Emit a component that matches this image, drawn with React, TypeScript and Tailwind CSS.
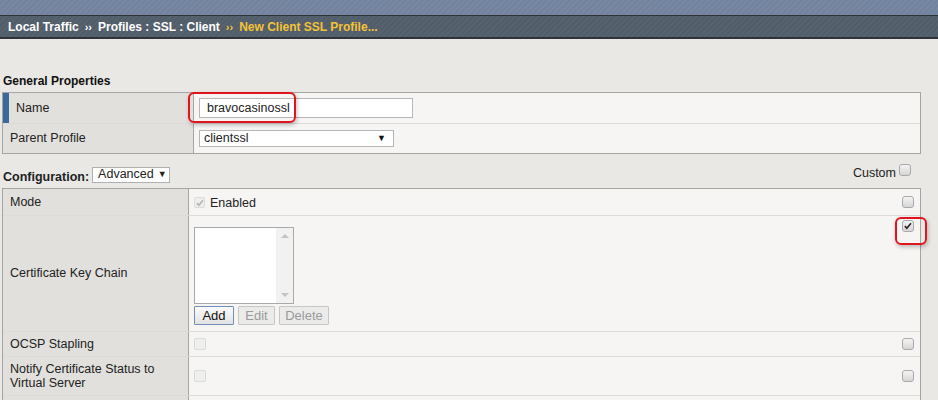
import React from "react";

const font = { fontFamily: '"Liberation Sans", Arial, sans-serif' };

function Box({ checked = false }: { checked?: boolean }) {
  return (
    <span className="relative inline-block w-[12px] h-[12px] rounded-[3px] border border-[#a9a9a9] bg-[linear-gradient(#f4f4f4,#d6d6d6)]">
      {checked && (
        <svg viewBox="0 0 12 12" className="absolute left-0 top-0 w-[10px] h-[10px]">
          <path d="M2.2 6.2 L4.6 8.6 L9.6 2.6" fill="none" stroke="#2a2a2a" strokeWidth="2" />
        </svg>
      )}
    </span>
  );
}

function FaintBox() {
  return <span className="inline-block w-[12px] h-[12px] rounded-[2px] border border-[#dadada] bg-[#efefed]" />;
}

export default function App() {
  return (
    <div className="w-[938px] h-[400px] overflow-hidden bg-[#e9e8e4] text-[12px] text-[#222]" style={font}>
      {/* top band */}
      <div className="h-[16px] border-b border-[#2f3236] bg-[#7686a0] bg-[repeating-linear-gradient(135deg,#7888a2_0px,#7888a2_2px,#7283a0_2px,#7283a0_4px)]" />
      {/* breadcrumb */}
      <div className="h-[23px] border-b-2 border-[#2f3236] bg-[#55606d] bg-[repeating-linear-gradient(135deg,#57626f_0px,#57626f_2px,#525d6a_2px,#525d6a_4px)] flex items-center pl-[8px] pt-[1px] font-bold text-[12px]">
        <span className="text-white">Local Traffic</span>
        <span className="text-white mx-[6px] text-[11px]">››</span>
        <span className="text-white">Profiles : SSL : Client</span>
        <span className="text-[#f4c335] mx-[6px] text-[11px]">››</span>
        <span className="text-[#f4c335]">New Client SSL Profile...</span>
      </div>

      <div className="pl-[2px] relative">
        <div className="pt-[35px] pl-[1px] h-[53px] font-bold text-[12px] leading-[14px] text-[#111]">General Properties</div>

        {/* General properties table */}
        <div className="w-[919px] border border-[#a5a5a3] bg-[#f6f5f3]">
          <div className="flex h-[31px] border-b border-[#dcdbd8]">
            <div className="w-[191px] bg-[#e1e0dd] border-r border-[#a5a5a3] border-l-[6px] border-l-[#3b6a9a] flex items-center pl-[7px] text-[12.5px]">Name</div>
            <div className="flex items-center pl-[5px]">
              <div className="w-[214px] h-[20px] border border-[#b6b6b6] bg-white flex items-center pl-[7px] text-[12.5px] text-[#222]">bravocasinossl</div>
            </div>
          </div>
          <div className="flex h-[29px]">
            <div className="w-[191px] bg-[#e1e0dd] border-r border-[#a5a5a3] flex items-center pl-[7px] text-[12.5px]">Parent Profile</div>
            <div className="flex items-center pl-[5px]">
              <div className="w-[195px] h-[17px] border border-[#b6b6b6] bg-white flex items-center justify-between pl-[4px] pr-[7px] text-[12.5px]">
                <span>clientssl</span>
                <span className="text-[9px] text-[#111]">▼</span>
              </div>
            </div>
          </div>
        </div>

        {/* Configuration row */}
        <div className="h-[34px] w-[919px] flex items-end pb-[1px] justify-between">
          <div className="flex items-center">
            <span className="font-bold text-[12.5px] pl-[1px] mt-[6px]">Configuration:</span>
            <div className="ml-[3px] w-[78px] h-[16px] border border-[#b0b0b0] bg-white flex items-center pl-[5px] text-[12.5px]">
              Advanced <span className="ml-[4px] text-[9px]">▼</span>
            </div>
          </div>
          <div className="flex items-center pr-[10px] mb-[4px]">
            <span className="text-[12.5px]">Custom</span>
            <span className="ml-[3px] -mt-[4px]"><Box /></span>
          </div>
        </div>

        {/* Configuration table */}
        <div className="w-[919px] border border-[#a5a5a3] border-b-0 bg-[#f6f5f3] text-[12.5px]">
          <div className="flex h-[27px] border-b border-[#dcdbd8]">
            <div className="w-[186px] shrink-0 bg-[#e1e0dd] border-r border-[#a5a5a3] flex items-center pl-[7px]">Mode</div>
            <div className="flex-1 flex items-center pl-[5px] justify-between pr-[6px]">
              <span className="flex items-center">
                <span className="relative inline-block w-[11px] h-[11px] rounded-[2px] border border-[#dcdcdc] bg-[#eeeeec]">
                  <svg viewBox="0 0 12 12" className="absolute left-0 top-0 w-[10px] h-[10px]">
                    <path d="M2.2 6.2 L4.6 8.6 L9.6 2.6" fill="none" stroke="#b5b5b5" strokeWidth="2" />
                  </svg>
                </span>
                <span className="ml-[5px] mt-[2px]">Enabled</span>
              </span>
              <Box />
            </div>
          </div>

          <div className="flex h-[116px] border-b border-[#dcdbd8]">
            <div className="w-[186px] shrink-0 bg-[#e1e0dd] border-r border-[#a5a5a3] flex items-center pl-[7px]">Certificate Key Chain</div>
            <div className="flex-1 flex justify-between pl-[5px] pr-[6px]">
              <div className="pt-[11px]">
                <div className="w-[100px] h-[77px] border border-[#a9a9a9] bg-white flex justify-end">
                  <div className="w-[17px] bg-[#f1f1f1] flex flex-col items-center justify-between py-[6px]">
                    <span className="w-0 h-0 border-l-[4px] border-r-[4px] border-b-[4px] border-l-transparent border-r-transparent border-b-[#c4c4c4]" />
                    <span className="w-0 h-0 border-l-[4px] border-r-[4px] border-t-[4px] border-l-transparent border-r-transparent border-t-[#c4c4c4]" />
                  </div>
                </div>
                <div className="flex gap-[4px] mt-[2px]">
                  <span className="w-[40px] h-[19px] border border-[#6f8fb8] rounded-[1px] bg-[linear-gradient(#fbfbfb,#e2e2e2)] flex items-center justify-center text-[13px] text-[#111]">Add</span>
                  <span className="w-[37px] h-[19px] border border-[#c6c6c6] rounded-[1px] bg-[#ebebea] flex items-center justify-center text-[13px] text-[#9a9a9a]">Edit</span>
                  <span className="w-[50px] h-[19px] border border-[#c6c6c6] rounded-[1px] bg-[#ebebea] flex items-center justify-center text-[13px] text-[#9a9a9a]">Delete</span>
                </div>
              </div>
              <div className="pt-[3px]">
                <Box checked />
              </div>
            </div>
          </div>

          <div className="flex h-[25px] border-b border-[#dcdbd8]">
            <div className="w-[186px] shrink-0 bg-[#e1e0dd] border-r border-[#a5a5a3] flex items-center pl-[7px]">OCSP Stapling</div>
            <div className="flex-1 flex items-center justify-between pl-[5px] pr-[6px]">
              <FaintBox />
              <Box />
            </div>
          </div>

          <div className="flex h-[39px] border-b border-[#dcdbd8]">
            <div className="w-[186px] shrink-0 bg-[#e1e0dd] border-r border-[#a5a5a3] flex items-center pl-[7px] leading-[14px]">
              Notify Certificate Status to
              <br />
              Virtual Server
            </div>
            <div className="flex-1 flex items-center justify-between pl-[5px] pr-[6px]">
              <FaintBox />
              <Box />
            </div>
          </div>

          <div className="flex h-[10px]">
            <div className="w-[186px] shrink-0 bg-[#e1e0dd] border-r border-[#a5a5a3]" />
            <div className="flex-1" />
          </div>
        </div>

        {/* red highlight overlays */}
        <div className="absolute left-[188px] top-[53px] w-[108px] h-[31px] rounded-[6px] border-2 border-[#e0141c] shadow-[1px_2px_4px_rgba(0,0,0,0.25)]" />
        <div className="absolute left-[895px] top-[178px] w-[32px] h-[28px] rounded-[6px] border-2 border-[#e0141c] shadow-[1px_2px_4px_rgba(0,0,0,0.25)]" />
      </div>
    </div>
  );
}
